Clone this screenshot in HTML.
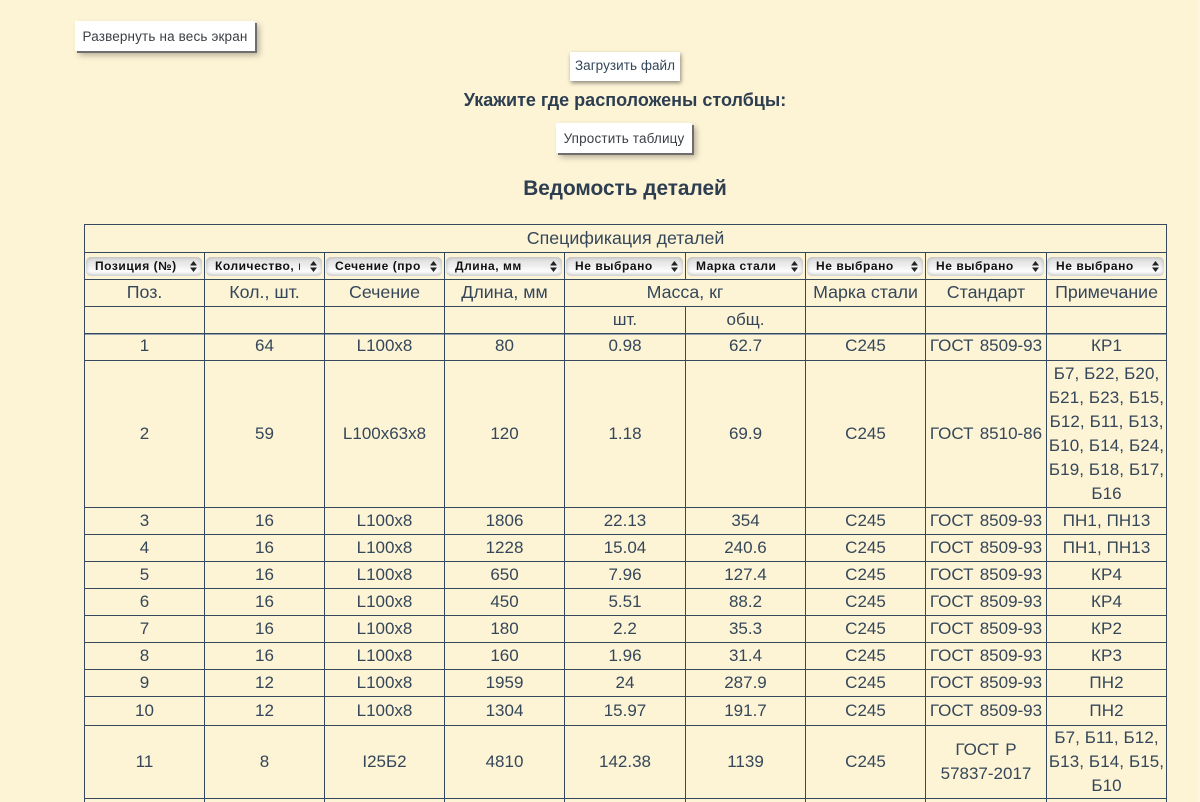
<!DOCTYPE html>
<html lang="ru"><head><meta charset="utf-8"><title>Ведомость деталей</title>
<style>
html,body{margin:0;padding:0;width:1200px;height:802px;overflow:hidden;background:#fef5e0}
#p{position:relative;width:1197px;height:802px;background:#fdf3d5;overflow:hidden;color:#2c3e50;font-family:"Liberation Sans",sans-serif}
.b{position:absolute;background:#fff;color:#3a3f45;font-size:13.5px;letter-spacing:.15px;text-align:center;white-space:nowrap}
.s{box-shadow:2px 2px 0 #6e6e6e,4px 4px 6px rgba(0,0,0,.3)}
.h{position:absolute;left:0;width:1250px;text-align:center;font-weight:bold;white-space:nowrap}
table{position:absolute;left:84px;top:224px;border-collapse:collapse;table-layout:fixed;width:1083px}
td{border:1px solid #34495e;padding:0;text-align:center;font-size:17px;line-height:24px;overflow:hidden;white-space:nowrap;color:#34475a}
td:nth-child(8){word-spacing:1.5px}
td:nth-child(9){letter-spacing:.1px}
.t td{font-size:17.8px;letter-spacing:0;padding-bottom:2px}
.r td{padding-bottom:2px;box-shadow:inset 0 1px 0 #98a2ac}
.sel{position:relative;display:block;height:19px;margin:3px 2px 3px 1px;border-radius:5px;background:linear-gradient(#dcdcdc,#ebebeb 40%,#fdfdfd 75%,#e6e6e6);box-shadow:inset 0 0 5px rgba(0,0,0,.22);font-size:12px;font-weight:bold;letter-spacing:.55px;word-spacing:0;line-height:19px;text-align:left;color:#111;overflow:hidden}
.sel i{position:absolute;left:0;top:0;width:85px;height:19px;overflow:hidden;font-style:normal;padding-left:9px}
.sel svg{position:absolute;right:5px;top:4px}
</style></head><body><div id="p">
<div class="b s" style="left:75px;top:21px;width:180px;height:30px;line-height:31px">Развернуть на весь экран</div>
<div class="b" style="left:570px;top:52px;width:110px;height:29px;line-height:28px;letter-spacing:.05px;color:#34475a;box-shadow:1px 2px 4px rgba(0,0,0,.45)">Загрузить файл</div>
<div class="h" style="top:90px;font-size:18px;line-height:20px">Укажите где расположены столбцы:</div>
<div class="b s" style="left:556px;top:123px;width:136px;height:30px;line-height:32px">Упростить таблицу</div>
<div class="h" style="top:177px;font-size:20.8px;line-height:24px">Ведомость деталей</div>
<table>
<colgroup><col style="width:120px"><col style="width:120px"><col style="width:120px"><col style="width:120px"><col style="width:121px"><col style="width:120px"><col style="width:120px"><col style="width:121px"><col style="width:120px"></colgroup>
<tr class="t" style="height:28px"><td colspan="9" style="padding-bottom:1px">Спецификация деталей</td></tr>
<tr style="height:27px">
<td><span class="sel"><i>Позиция (№)</i><svg width="7" height="11"><path d="M3.5 0L7 4.5H0ZM3.5 11L0 6.5H7Z" fill="#222"/></svg></span></td>
<td><span class="sel"><i>Количество, ш</i><svg width="7" height="11"><path d="M3.5 0L7 4.5H0ZM3.5 11L0 6.5H7Z" fill="#222"/></svg></span></td>
<td><span class="sel"><i>Сечение (про</i><svg width="7" height="11"><path d="M3.5 0L7 4.5H0ZM3.5 11L0 6.5H7Z" fill="#222"/></svg></span></td>
<td><span class="sel"><i>Длина, мм</i><svg width="7" height="11"><path d="M3.5 0L7 4.5H0ZM3.5 11L0 6.5H7Z" fill="#222"/></svg></span></td>
<td><span class="sel"><i>Не выбрано</i><svg width="7" height="11"><path d="M3.5 0L7 4.5H0ZM3.5 11L0 6.5H7Z" fill="#222"/></svg></span></td>
<td><span class="sel"><i>Марка стали</i><svg width="7" height="11"><path d="M3.5 0L7 4.5H0ZM3.5 11L0 6.5H7Z" fill="#222"/></svg></span></td>
<td><span class="sel"><i>Не выбрано</i><svg width="7" height="11"><path d="M3.5 0L7 4.5H0ZM3.5 11L0 6.5H7Z" fill="#222"/></svg></span></td>
<td><span class="sel"><i>Не выбрано</i><svg width="7" height="11"><path d="M3.5 0L7 4.5H0ZM3.5 11L0 6.5H7Z" fill="#222"/></svg></span></td>
<td><span class="sel" style="margin-left:0"><i>Не выбрано</i><svg width="7" height="11"><path d="M3.5 0L7 4.5H0ZM3.5 11L0 6.5H7Z" fill="#222"/></svg></span></td>
</tr>
<tr class="t" style="height:27px"><td>Поз.</td><td>Кол., шт.</td><td>Сечение</td><td>Длина, мм</td><td colspan="2">Масса, кг</td><td>Марка стали</td><td>Стандарт</td><td>Примечание</td></tr>
<tr style="height:27px"><td></td><td></td><td></td><td></td><td>шт.</td><td>общ.</td><td></td><td></td><td></td></tr>
<tr class="r" style="height:27px"><td>1</td><td>64</td><td>L100x8</td><td>80</td><td>0.98</td><td>62.7</td><td>С245</td><td>ГОСТ 8509-93</td><td>КР1</td></tr>
<tr style="height:147px"><td>2</td><td>59</td><td>L100x63x8</td><td>120</td><td>1.18</td><td>69.9</td><td>С245</td><td>ГОСТ 8510-86</td><td>Б7, Б22, Б20,<br>Б21, Б23, Б15,<br>Б12, Б11, Б13,<br>Б10, Б14, Б24,<br>Б19, Б18, Б17,<br>Б16</td></tr>
<tr style="height:27px"><td>3</td><td>16</td><td>L100x8</td><td>1806</td><td>22.13</td><td>354</td><td>С245</td><td>ГОСТ 8509-93</td><td>ПН1, ПН13</td></tr>
<tr style="height:27px"><td>4</td><td>16</td><td>L100x8</td><td>1228</td><td>15.04</td><td>240.6</td><td>С245</td><td>ГОСТ 8509-93</td><td>ПН1, ПН13</td></tr>
<tr style="height:27px"><td>5</td><td>16</td><td>L100x8</td><td>650</td><td>7.96</td><td>127.4</td><td>С245</td><td>ГОСТ 8509-93</td><td>КР4</td></tr>
<tr style="height:27px"><td>6</td><td>16</td><td>L100x8</td><td>450</td><td>5.51</td><td>88.2</td><td>С245</td><td>ГОСТ 8509-93</td><td>КР4</td></tr>
<tr style="height:27px"><td>7</td><td>16</td><td>L100x8</td><td>180</td><td>2.2</td><td>35.3</td><td>С245</td><td>ГОСТ 8509-93</td><td>КР2</td></tr>
<tr style="height:27px"><td>8</td><td>16</td><td>L100x8</td><td>160</td><td>1.96</td><td>31.4</td><td>С245</td><td>ГОСТ 8509-93</td><td>КР3</td></tr>
<tr style="height:27px"><td>9</td><td>12</td><td>L100x8</td><td>1959</td><td>24</td><td>287.9</td><td>С245</td><td>ГОСТ 8509-93</td><td>ПН2</td></tr>
<tr style="height:29px"><td>10</td><td>12</td><td>L100x8</td><td>1304</td><td>15.97</td><td>191.7</td><td>С245</td><td>ГОСТ 8509-93</td><td>ПН2</td></tr>
<tr style="height:73px"><td>11</td><td>8</td><td>I25Б2</td><td>4810</td><td>142.38</td><td>1139</td><td>С245</td><td>ГОСТ Р<br>57837-2017</td><td>Б7, Б11, Б12,<br>Б13, Б14, Б15,<br>Б10</td></tr>
<tr style="height:27px"><td></td><td></td><td></td><td></td><td></td><td></td><td></td><td></td><td></td></tr>
</table>
</div></body></html>
